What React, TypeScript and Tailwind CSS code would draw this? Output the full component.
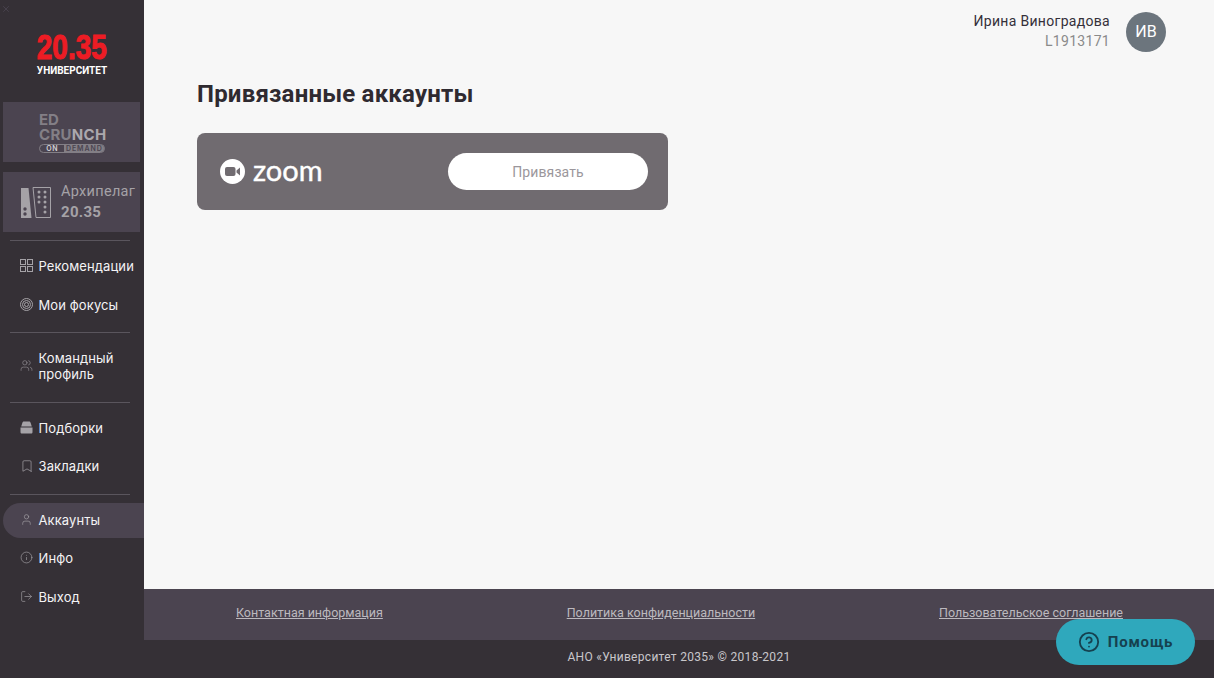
import { Bookmark, CircleHelp, Info, LogOut, User, Users, X } from "lucide-react";
import type { ReactNode } from "react";

/**
 * Sidebar row: icon + label.
 */
function NavItem({ icon, children, active }: { icon: ReactNode; children: ReactNode; active?: boolean }) {
  return (
    <div
      className={
        `flex items-center rounded-l-[18px] pl-[17px] text-[13px] leading-4 tracking-[0.1px] text-[#f4f3f5]` +
        (active ? ` h-[35px] bg-[#4b4450] pb-[2px]` : ` min-h-[39px]`)
      }
    >
      <span className="flex w-[18.5px] shrink-0 items-center text-[#a5a2a7]">{icon}</span>
      <span>{children}</span>
    </div>
  );
}

function Divider() {
  return <div className="ml-[7px] h-px w-[120px] bg-[#5a555d]" />;
}

function GridIcon() {
  return (
    <svg width="13" height="13" viewBox="0 0 13 13" fill="none" stroke="currentColor" strokeWidth="1">
      <rect x="0.500" y="0.500" width="5" height="5" />
      <rect x="7.500" y="0.500" width="5" height="5" />
      <rect x="0.500" y="7.500" width="5" height="5" />
      <rect x="7.500" y="7.500" width="5" height="5" />
    </svg>
  );
}

function TargetIcon() {
  return (
    <svg width="13" height="13" viewBox="0 0 13 13" fill="none" stroke="currentColor" strokeWidth="1">
      <circle cx="6.500" cy="6.500" r="6" />
      <circle cx="6.500" cy="6.500" r="4" />
      <circle cx="6.500" cy="6.500" r="2" />
    </svg>
  );
}

function StackIcon() {
  return (
    <svg width="13" height="13" viewBox="0 0 13 13" fill="currentColor">
      <path d="M4 0.500h5c.8 0 1.300.5 1.600 1.200L11.800 5.500H1.200L2.400 1.700C2.700 1 3.200.5 4 .5z" />
      <path d="M0.500 6.500h12v4.800c0 .8-.6 1.300-1.300 1.300H1.800c-.7 0-1.300-.5-1.300-1.300z" />
    </svg>
  );
}

function ArchipelagoIcon() {
  return (
    <svg width="32" height="33" viewBox="0 0 32 33" fill="none" className="shrink-0">
      <path d="M1 2h7.500l3 30H1z" fill="#a5a2a7" />
      <circle cx="5" cy="23" r="1.700" fill="#4b4450" />
      <circle cx="5" cy="28" r="1.700" fill="#4b4450" />
      <path d="M13 1.500h17.500v30H16z" stroke="#a5a2a7" strokeWidth="1" />
      <g fill="#a5a2a7">
        <circle cx="19" cy="6" r="1.500" />
        <circle cx="25" cy="6" r="1.500" />
        <circle cx="19" cy="11" r="1.500" />
        <circle cx="25" cy="11" r="1.500" />
        <circle cx="19" cy="16" r="1.500" />
        <circle cx="25" cy="16" r="1.500" />
        <circle cx="25" cy="21" r="1.500" />
        <circle cx="25" cy="26" r="1.500" />
      </g>
    </svg>
  );
}

function ZoomMark() {
  return (
    <svg width="25" height="25" viewBox="0 0 25 25">
      <circle cx="12.500" cy="12.500" r="12.500" fill="#fff" />
      <rect x="5" y="8" width="10.500" height="9" rx="2" fill="#706b70" />
      <path d="M16.500 11.500l3.500-3v8l-3.500-3z" fill="#706b70" />
    </svg>
  );
}

function Sidebar() {
  return (
    <aside className="relative flex h-full w-[144px] shrink-0 flex-col bg-[#353036] font-['Inter',sans-serif]">
      <X size={10} className="absolute left-[1px] top-[4px] text-[#4b4450]" />

      <div className="flex h-[102px] flex-col items-center pt-[28px]">
        <div className="origin-center scale-x-[0.8] font-['Liberation_Sans',sans-serif] text-[35px] font-bold leading-[37px] text-[#ed1c24] [-webkit-text-stroke:1px_#ed1c24]">
          20.35
        </div>
        <div className="mt-[-1px] font-['Roboto',sans-serif] text-[10px] font-bold leading-[14px] text-white">
          УНИВЕРСИТЕТ
        </div>
      </div>

      <div className="ml-[3px] flex h-[60px] w-[137px] flex-col justify-center bg-[#4b4450] pl-[36px] font-bold leading-[15px] text-[#837f86]">
        <div className="text-[15px]">ED</div>
        <div className="text-[15px] tracking-[0.3px]">
          CRU
          <span className="text-[#aba8ad]">NCH</span>
        </div>
        <div className="mt-[2px] flex h-[9px] w-[66px] items-center overflow-hidden rounded-full border border-[#837f86] text-[7px] font-semibold leading-none">
          <span className="flex h-full w-[24px] items-center justify-end pr-[6px] tracking-[0.5px] text-[#d5d3d6]">
            ON
          </span>
          <span className="flex h-full flex-1 items-center bg-[#837f86] pl-[2px] tracking-[0.9px] text-[#4b4450]">
            DEMAND
          </span>
        </div>
      </div>

      <div className="ml-[3px] mt-[10px] flex h-[60px] w-[137px] items-center gap-[9px] bg-[#4b4450] pl-[17px] font-['Roboto',sans-serif] text-[#a5a2a7]">
        <ArchipelagoIcon />
        <div className="text-[14.5px] leading-[20px] tracking-[0.3px]">
          <div>Архипелаг</div>
          <div className="text-[15px] font-bold">20.35</div>
        </div>
      </div>

      <div className="ml-[3px] mt-[8px]">
        <Divider />
      </div>

      <nav className="mt-[5px] flex flex-col pl-[3px]">
        <NavItem icon={<GridIcon />}>Рекомендации</NavItem>
        <NavItem icon={<TargetIcon />}>Мои фокусы</NavItem>
        <div className="mt-[8px]">
          <Divider />
        </div>
        <div className="mt-[13px]">
          <NavItem icon={<Users size={13} strokeWidth={1} />}>
            Командный
            <br />
            профиль
          </NavItem>
        </div>
        <div className="mb-[5px] mt-[17px]">
          <Divider />
        </div>
        <NavItem icon={<StackIcon />}>Подборки</NavItem>
        <div className="-mt-px">
          <NavItem icon={<Bookmark size={14} strokeWidth={1.2} />}>Закладки</NavItem>
        </div>
        <div className="mb-[8px] mt-[9px]">
          <Divider />
        </div>
        <NavItem active icon={<User size={13} strokeWidth={1.2} />}>
          Аккаунты
        </NavItem>
        <NavItem icon={<Info size={13} strokeWidth={1.2} />}>Инфо</NavItem>
        <NavItem icon={<LogOut size={13} strokeWidth={1.2} />}>Выход</NavItem>
      </nav>
    </aside>
  );
}

function Footer() {
  return (
    <footer className="font-['Roboto',sans-serif]">
      <div className="flex h-[51px] items-center bg-[#4b4450] pb-[2px] pl-[92px] pr-[91px] text-[12.5px] text-[#bcb9be] underline">
        <div className="flex w-full justify-between">
          <span>Контактная информация</span>
          <span>Политика конфиденциальности</span>
          <span>Пользовательское соглашение</span>
        </div>
      </div>
      <div className="flex h-[38px] items-center justify-center bg-[#353036] pb-[4px] text-xs tracking-[0.3px] text-[#c9c7cb]">
        АНО «Университет 2035» © 2018-2021
      </div>
    </footer>
  );
}

export default function App() {
  return (
    <div className="relative flex h-[678px] w-full overflow-hidden bg-[#f7f7f7] font-['Roboto',sans-serif]">
      <Sidebar />
      <div className="flex min-w-0 flex-1 flex-col">
        <header className="flex h-[64px] items-start justify-end pr-[48px] pt-[12px]">
          <div className="pr-[16px] text-right">
            <div className="text-sm leading-[19px] tracking-[0.3px] text-[#35303a]">Ирина Виноградова</div>
            <div className="text-sm leading-[20px] tracking-[0.3px] text-[#8a8a8a]">L1913171</div>
          </div>
          <div className="flex h-10 w-10 items-center justify-center rounded-full bg-[#6c757d] text-base text-white">
            ИВ
          </div>
        </header>

        <main className="flex-1 pl-[53px] pt-[14px]">
          <h1 className="text-2xl font-bold leading-8 tracking-[0.2px] text-[#2f2a30]">Привязанные аккаунты</h1>
          <div className="mt-[23px] flex h-[77px] w-[471px] items-center justify-between rounded-lg bg-[#706b70] pl-[23px] pr-[20px]">
            <div className="flex items-center gap-[8px]">
              <ZoomMark />
              <span className="-mt-[4px] font-['Lato',sans-serif] text-[29px] font-normal leading-none text-white [-webkit-text-stroke:0.4px_#fff]">
                zoom
              </span>
            </div>
            <button className="h-[37px] w-[200px] rounded-full bg-white text-sm tracking-[0.1px] text-[#9b979c]">
              Привязать
            </button>
          </div>
        </main>

        <Footer />
      </div>

      {/* floating help button */}
      <button className="absolute left-[1056px] top-[619px] flex h-[46px] w-[139px] items-center justify-center gap-[8px] rounded-full bg-[#2fa8bc] text-[15px] font-bold tracking-[0.8px] text-[#15414f]">
        <CircleHelp size={22} strokeWidth={2} />
        Помощь
      </button>
    </div>
  );
}
